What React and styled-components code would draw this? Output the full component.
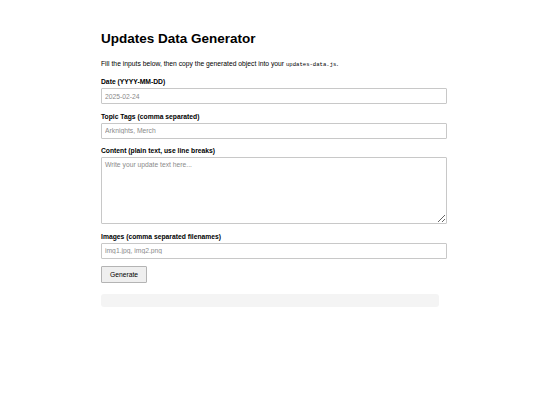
import React from 'react';
import styled, { createGlobalStyle } from 'styled-components';

// ==============================
// ===========  STYLES  =========
// ==============================

const GlobalStyle = createGlobalStyle`
  body {
    margin: 0;
    background: #fff;
    font-family: "Liberation Sans", Arial, sans-serif;
    color: #000;
  }
`;

const Page = styled.main`
  max-width: 338px;
  margin: 0 auto;
  padding-top: 31px;
`;

const Title = styled.h1`
  margin: 0 0 14px;
  font-size: 13.5px;
  line-height: 15px;
  font-weight: bold;
`;

const Intro = styled.p`
  margin: 0 0 9px;
  font-size: 6.75px;
  line-height: 8px;

  code {
    font-family: "Liberation Mono", "DejaVu Sans Mono", monospace;
    font-size: 5.6px;
  }
`;

const Label = styled.label`
  display: block;
  margin: ${props => (props.first ? '0' : '8.5px')} 0 2px;
  font-size: 6.75px;
  line-height: 8px;
  font-weight: bold;
`;

const fieldStyles = `
  display: block;
  box-sizing: content-box;
  width: 100%;
  margin: 0;
  padding: 0 3px;
  border: 1px solid #c8c8c8;
  border-radius: 1px;
  font-family: "Liberation Sans", Arial, sans-serif;
  font-size: 6.75px;
  color: #000;
  background: #fff;
  outline: none;

  &::placeholder {
    color: #8a8a8a;
  }
`;

const Input = styled.input`
  ${fieldStyles}
  height: 14px;
`;

const TextArea = styled.textarea`
  ${fieldStyles}
  height: 62px;
  padding-top: 3px;
  padding-bottom: 0;
  margin-bottom: 2.5px;
  resize: vertical;
`;

const Button = styled.button`
  display: block;
  margin: 7px 0 11px;
  width: 46px;
  height: 17px;
  padding: 0;
  border: 1px solid #b4b4b4;
  border-radius: 1px;
  background: #efefef;
  font-family: "Liberation Sans", Arial, sans-serif;
  font-size: 6.75px;
  color: #000;
`;

const Output = styled.pre`
  margin: 0;
  height: 13px;
  background: #f4f4f4;
  border-radius: 3px;
`;

// =================================
// ===========  COMPONENT  =========
// =================================

function App() {
  return (
    <>
      <GlobalStyle />
      <Page>
        <Title>Updates Data Generator</Title>
        <Intro>
          Fill the inputs below, then copy the generated object into your{' '}
          <code>updates-data.js</code>.
        </Intro>

        <Label first htmlFor="date">Date (YYYY-MM-DD)</Label>
        <Input id="date" placeholder="2025-02-24" />

        <Label htmlFor="tags">Topic Tags (comma separated)</Label>
        <Input id="tags" placeholder="Arknights, Merch" />

        <Label htmlFor="content">Content (plain text, use line breaks)</Label>
        <TextArea id="content" placeholder="Write your update text here..." />

        <Label htmlFor="images">Images (comma separated filenames)</Label>
        <Input id="images" placeholder="img1.jpg, img2.png" />

        <Button>Generate</Button>
        <Output />
      </Page>
    </>
  );
}

export default App;
